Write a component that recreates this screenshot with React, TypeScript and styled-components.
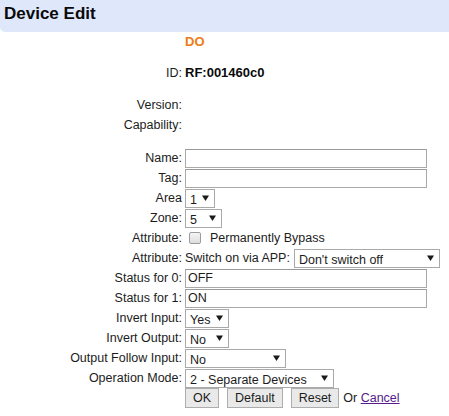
import React from 'react';
import styled, { createGlobalStyle } from 'styled-components';

const GlobalStyle = createGlobalStyle`
  html, body {
    margin: 0;
    padding: 0;
    background: #fff;
  }
  body {
    font-family: "Liberation Sans", Arial, sans-serif;
    font-size: 12.5px;
    color: #1c1c1c;
  }
`;

const Page = styled.div`
  width: 449px;
`;

const Header = styled.div`
  height: 32px;
  box-sizing: border-box;
  padding: 4px;
  background: #dfe8fb;
  border-radius: 0 0 0 5px;
  font-size: 17px;
  font-weight: bold;
  line-height: 20px;
  color: #0a0a0a;
`;

const Form = styled.div`
  display: flex;
  flex-direction: column;
`;

const Row = styled.div<{ $h?: number; $mt?: number; $baseline?: boolean }>`
  display: flex;
  align-items: ${(p) => (p.$baseline ? 'baseline' : 'center')};
  height: ${(p) => p.$h ?? 20}px;
  margin-top: ${(p) => p.$mt ?? 0}px;
  line-height: 20px;
`;

const Label = styled.div`
  width: 182px;
  flex: none;
  text-align: right;
  white-space: nowrap;
`;

const Field = styled.div<{ $gap?: number }>`
  margin-left: 3px;
  display: flex;
  align-items: center;
  gap: ${(p) => p.$gap ?? 4}px;
  white-space: nowrap;
`;

const Value = styled.span<{ $accent?: boolean }>`
  font-size: 13px;
  font-weight: bold;
  color: ${(p) => (p.$accent ? '#ee7b16' : '#0a0a0a')};
`;

const TextInput = styled.input`
  width: 242px;
  height: 19px;
  box-sizing: border-box;
  margin: 0;
  padding: 0 2px;
  border: 1px solid #a9a9a9;
  border-top-color: #999;
  font: inherit;
  color: #1c1c1c;
  outline: 0;
`;

const SelectBox = styled.span<{ $w: number }>`
  display: inline-flex;
  align-items: center;
  width: ${(p) => p.$w}px;
  height: 19px;
  box-sizing: border-box;
  border: 1px solid #a9a9a9;
  background: #fff;
`;

const NativeSelect = styled.select`
  appearance: none;
  flex: 1;
  min-width: 0;
  height: 100%;
  margin: 0;
  padding: 0 0 0 4px;
  border: 0;
  outline: 0;
  background: transparent;
  font: inherit;
  color: #1c1c1c;
`;

const ArrowIcon = styled.svg`
  flex: none;
  margin-right: 5px;
`;

const Checkbox = styled.input`
  appearance: none;
  width: 12px;
  height: 12px;
  box-sizing: border-box;
  margin: 0 9px 0 4px;
  border: 1px solid #9c9c9c;
  border-radius: 2px;
  background: linear-gradient(#f4f4f4, #dedede);
`;

const ButtonGroup = styled.div`
  display: flex;
  gap: 8px;
`;

const Button = styled.button`
  height: 20px;
  box-sizing: border-box;
  margin: 0;
  padding: 0 7px;
  border: 1px solid #adadad;
  border-radius: 0;
  background: #e9e9e9;
  font: inherit;
  color: #1c1c1c;
  line-height: 18px;
`;

const CancelLink = styled.a`
  color: #551a8b;
  text-decoration: underline;
`;

type SelectProps = { width: number; value: string; options: string[] };

const Select = ({ width, value, options }: SelectProps) => (
  <SelectBox $w={width}>
    <NativeSelect defaultValue={value}>
      {options.map((o) => (
        <option key={o}>{o}</option>
      ))}
    </NativeSelect>
    <ArrowIcon width="7" height="6" viewBox="0 0 7 6">
      <path d="M0 0.5h7L3.5 6z" fill="#1a1a1a" />
    </ArrowIcon>
  </SelectBox>
);

const App = () => (
  <Page>
    <GlobalStyle />
    <Header>Device Edit</Header>
    <Form>
      <Row>
        <Label />
        <Field>
          <Value $accent>DO</Value>
        </Field>
      </Row>
      <Row $mt={11} $baseline>
        <Label>ID:</Label>
        <Field>
          <Value>RF:001460c0</Value>
        </Field>
      </Row>
      <Row $mt={12}>
        <Label>Version:</Label>
      </Row>
      <Row>
        <Label>Capability:</Label>
      </Row>
      <Row $mt={13}>
        <Label>Name:</Label>
        <Field>
          <TextInput type="text" />
        </Field>
      </Row>
      <Row>
        <Label>Tag:</Label>
        <Field>
          <TextInput type="text" />
        </Field>
      </Row>
      <Row>
        <Label>Area</Label>
        <Field>
          <Select width={30} value="1" options={['1', '2', '3', '4']} />
        </Field>
      </Row>
      <Row>
        <Label>Zone:</Label>
        <Field>
          <Select width={37} value="5" options={['1', '2', '3', '4', '5', '6']} />
        </Field>
      </Row>
      <Row>
        <Label>Attribute:</Label>
        <Field $gap={0}>
          <Checkbox type="checkbox" />
          <span>Permanently Bypass</span>
        </Field>
      </Row>
      <Row>
        <Label>Attribute:</Label>
        <Field>
          <span>Switch on via APP:</span>
          <Select width={146} value="Don't switch off" options={["Don't switch off", 'Switch off']} />
        </Field>
      </Row>
      <Row>
        <Label>Status for 0:</Label>
        <Field>
          <TextInput type="text" defaultValue="OFF" />
        </Field>
      </Row>
      <Row>
        <Label>Status for 1:</Label>
        <Field>
          <TextInput type="text" defaultValue="ON" />
        </Field>
      </Row>
      <Row>
        <Label>Invert Input:</Label>
        <Field>
          <Select width={44} value="Yes" options={['Yes', 'No']} />
        </Field>
      </Row>
      <Row>
        <Label>Invert Output:</Label>
        <Field>
          <Select width={44} value="No" options={['Yes', 'No']} />
        </Field>
      </Row>
      <Row>
        <Label>Output Follow Input:</Label>
        <Field>
          <Select width={101} value="No" options={['Yes', 'No']} />
        </Field>
      </Row>
      <Row>
        <Label>Operation Mode:</Label>
        <Field>
          <Select
            width={149}
            value="2 - Separate Devices"
            options={['1 - Combined Device', '2 - Separate Devices']}
          />
        </Field>
      </Row>
      <Row>
        <Label />
        <Field>
          <ButtonGroup>
            <Button type="button">OK</Button>
            <Button type="button">Default</Button>
            <Button type="button">Reset</Button>
          </ButtonGroup>
          <span>
            Or <CancelLink href="#">Cancel</CancelLink>
          </span>
        </Field>
      </Row>
    </Form>
  </Page>
);

export default App;
